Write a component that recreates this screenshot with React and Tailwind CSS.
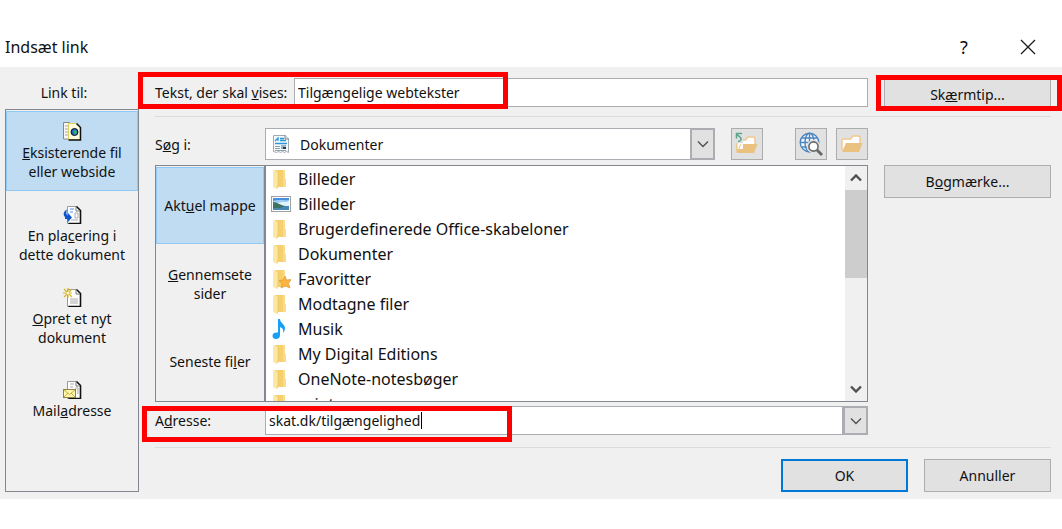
import React from "react";

const FolderIcon = ({ starred }) => (
  <svg width="20" height="20" viewBox="0 0 20 20" aria-hidden="true">
    <path d="M4 1h10v9h1v8H4z" fill="#f6d06f" />
    <path d="M12 1h2v9h1v8h-3z" fill="#f9dc8a" />
    <path d="M2 1l5 2v13l-1 4-4-2z" fill="#fde7a4" />
    <path d="M7 3v13l-1 3.5" fill="none" stroke="#f0c95f" strokeWidth="0.8" />
    {starred && (
      <path
        d="M14 7l1.5 4 4.5-.5-2.5 4 1.5 4.5-4.500-2L10 19l1-4.500L8 11.500l4-.5z"
        fill="#fbb540"
        stroke="#dd9638"
        strokeWidth="0.7"
      />
    )}
  </svg>
);

const PictureIcon = () => (
  <svg width="20" height="20" viewBox="0 0 20 20" aria-hidden="true">
    <rect x="0.5" y="2.5" width="19" height="15" fill="#fff" stroke="#a0a0a0" />
    <rect x="2" y="4" width="16" height="12" fill="#9fcdf5" />
    <path d="M2 4h16v2c-5 1-10-1-16 1z" fill="#4a8fdc" />
    <path d="M7 9c4-2 7 0 11-2v5H8z" fill="#e4f2fb" />
    <path d="M2 8c4 0 7 3 12 4H2z" fill="#3d7564" />
    <path d="M2 12h16v4H2z" fill="#4787b4" />
    <path d="M2 12h12l-5 2H2z" fill="#3f7267" />
  </svg>
);

const MusicIcon = () => (
  <svg width="20" height="20" viewBox="0 0 20 20" aria-hidden="true">
    <path
      d="M7 0h2c0 4 5 5 5 9 0 2-1 4-2 5 1-4-1-5-3-6v8c0 3-2 4-4 4s-3.500-1-3.500-3C1.500 14 4 13 7 13.500z"
      fill="#18a0f5"
    />
  </svg>
);

const DocumentIcon = () => (
  <svg width="18" height="20" viewBox="0 0 18 20" aria-hidden="true">
    <path d="M1.500 1.500h12l3 3v14l-2-1-2 1-2-1-2 1-2-1-2 1-3-1z" fill="#f7f9fa" stroke="#a3abaf" />
    <path d="M13 1v4h4" fill="#dfe4e7" stroke="#7f8a8f" />
    <path d="M3 7l3-3v3M8 4.500h4M8 6.500h6M3 9.500h12" stroke="#2897dc" strokeWidth="1.3" fill="none" />
    <path d="M3 12.500h5M3 14.500h5M3 16.500h11" stroke="#8aa0ab" />
    <rect x="9" y="11" width="5" height="4" fill="#8fb6cc" />
    <path d="M11 13h3v2h-3z" fill="#203a55" />
  </svg>
);

const Page = () => (
  <g>
    <path d="M4.500 1.500h9l4 4v13h-13z" fill="#fff" stroke="#9a9a9a" />
    <path d="M13.500 1.500l4 4v13h-12" fill="none" stroke="#111" strokeWidth="1.6" />
    <path d="M13 2v4h4" fill="none" stroke="#777" />
  </g>
);

const WebPageIcon = () => (
  <svg width="19" height="19" viewBox="0 0 19 19" aria-hidden="true">
    <path d="M0.500 0.500h6l2 2V17h-8z" fill="#f6f6f6" stroke="#888" />
    <path d="M2 4h3M2 7h3M2 10h3M2 13h3" stroke="#aaa" />
    <path d="M5.500 1.500h8l4 4v12h-12z" fill="#fffde0" stroke="#e0d060" />
    <path d="M13.500 1.500l4 4v12.500h-12" fill="none" stroke="#111" strokeWidth="1.5" />
    <circle cx="11.500" cy="10" r="3.500" fill="#1c62b8" stroke="#111" />
    <path d="M10 9l3-1 1 3-2 2-1-2z" fill="#35b56a" />
  </svg>
);

const PlaceIcon = () => (
  <svg width="19" height="19" viewBox="0 0 19 19" aria-hidden="true">
    <Page />
    <path d="M7 4h4M7 7h3" stroke="#4c8df0" />
    <path d="M12 8h3v5h-3zM8 15h7" fill="none" stroke="#aaa" />
    <path d="M4 4.500C0 6.500 0 10 2 12v2h2.500v3.500L9 12.500 5 8v3C3 9.500 3 7 4 4.500z" fill="#0f57c8" />
  </svg>
);

const NewDocIcon = () => (
  <svg width="19" height="19" viewBox="0 0 19 19" aria-hidden="true">
    <Page />
    <path d="M7 11h8M7 13h8M7 15h8" stroke="#aaa" />
    <path d="M5 0v10M0 5h9M1 1l8 8M9 1L1 9" stroke="#d6b52c" strokeWidth="1.2" />
    <circle cx="5" cy="5" r="1.500" fill="#fff8c0" />
  </svg>
);

const MailIcon = () => (
  <svg width="19" height="19" viewBox="0 0 19 19" aria-hidden="true">
    <Page />
    <path d="M7 4h4M7 7h3M12 8h3v6" fill="none" stroke="#aaa" />
    <rect x="0.500" y="9.500" width="12" height="8" fill="#fff6b0" stroke="#8d8146" />
    <path d="M1 10l5.500 4.500L12 10M1 17l4-4M12 17l-4-4" fill="none" stroke="#c8ad3a" />
  </svg>
);

const OpenFolder = () => (
  <g>
    <path
      d="M2 17V7.500c0-1 .5-1.500 1.500-1.500h7L13 3h5.500c1 0 1.500.5 1.500 1.500V10"
      fill="#fff"
      stroke="#f0c78b"
      strokeWidth="1.4"
    />
    <path d="M6 10h16.500L19 19H2z" fill="#ebc180" />
  </g>
);

const OpenFolderIcon = () => (
  <svg width="24" height="22" viewBox="0 0 24 22" aria-hidden="true">
    <OpenFolder />
  </svg>
);

const UpFolderIcon = () => (
  <svg width="24" height="24" viewBox="0 0 24 24" aria-hidden="true">
    <g transform="translate(0 2)">
      <OpenFolder />
    </g>
    <path d="M0 0h8v11H0z" fill="#e1e1e1" />
    <path d="M2 12h6v5H2z" fill="#fff" />
    <path d="M2 12v8M2 20.500L6 12" stroke="#ebc180" />
    <path d="M7 1.500H1.500v5M1.500 2l4 3.500c1.500 1.500 0 4-2.500 4" fill="none" stroke="#5da68c" strokeWidth="1.6" />
  </svg>
);

const SearchWebIcon = () => (
  <svg width="24" height="24" viewBox="0 0 24 24" aria-hidden="true">
    <g fill="#f4f7fa" stroke="#4c86c0" strokeWidth="1.4">
      <circle cx="10.500" cy="10.500" r="9.300" />
      <ellipse cx="10.500" cy="10.500" rx="4.500" ry="9.300" />
      <path d="M10.500 1.200v18.600M2.500 6h16M1.200 10.500h18.600M2.500 15h16" fill="none" />
    </g>
    <circle cx="14.500" cy="14.500" r="4.800" fill="#fff" stroke="#e1e1e1" strokeWidth="4" />
    <path d="M18 18l5 5" stroke="#676767" strokeWidth="2.800" />
    <circle cx="14.500" cy="14.500" r="4.600" fill="#fff" stroke="#676767" strokeWidth="1.600" />
  </svg>
);

const Chevron = ({ up, bold }) => (
  <svg width="12" height="8" viewBox="0 0 12 8" aria-hidden="true">
    <path
      d={up ? "M1 6.500l5-5 5 5" : "M1 1.500l5 5 5-5"}
      fill="none"
      stroke="#505050"
      strokeWidth={bold ? 2.4 : 1.4}
    />
  </svg>
);

const linkTargets = [
  { icon: <WebPageIcon />, label: <><u>E</u>ksisterende fil<br />eller webside</>, active: true },
  { icon: <PlaceIcon />, label: <>En pla<u>c</u>ering i<br />dette dokument</> },
  { icon: <NewDocIcon />, label: <><u>O</u>pret et nyt<br />dokument</> },
  { icon: <MailIcon />, label: <>Mail<u>a</u>dresse</> },
];

const places = [
  { label: <>Akt<u>u</u>el mappe</>, active: true },
  { label: <><u>G</u>ennemsete<br />sider</> },
  { label: <>Seneste fi<u>l</u>er</> },
];

const files = [
  { name: "Billeder", icon: <FolderIcon /> },
  { name: "Billeder", icon: <PictureIcon /> },
  { name: "Brugerdefinerede Office-skabeloner", icon: <FolderIcon /> },
  { name: "Dokumenter", icon: <FolderIcon /> },
  { name: "Favoritter", icon: <FolderIcon starred /> },
  { name: "Modtagne filer", icon: <FolderIcon /> },
  { name: "Musik", icon: <MusicIcon /> },
  { name: "My Digital Editions", icon: <FolderIcon /> },
  { name: "OneNote-notesbøger", icon: <FolderIcon /> },
  { name: "print", icon: <FolderIcon /> },
];

const DialogButton = ({ children, primary }) => (
  <button
    type="button"
    className={
      primary
        ? "h-[33px] w-[127px] border-2 border-[#0078d7] bg-[#e1e1e1] text-center"
        : "h-[33px] w-[127px] border border-[#adadad] bg-[#e1e1e1] text-center"
    }
  >
    {children}
  </button>
);

const SideButton = ({ children }) => (
  <button type="button" className="h-[33px] w-full border border-[#adadad] bg-[#e1e1e1] text-center">
    {children}
  </button>
);

const ToolButton = ({ label, children }) => (
  <button
    type="button"
    aria-label={label}
    className="flex h-8 w-8 shrink-0 items-center justify-center border border-[#adadad] bg-[#e1e1e1]"
  >
    {children}
  </button>
);

const App = () => {
  return (
    <div className="min-h-screen bg-white font-['Noto_Sans',sans-serif] text-sm leading-[19px] text-[#111111]">
      <header className="flex h-[67px] items-center justify-between pt-[26px] pr-[26px] pl-[5px]">
        <h1 className="text-base">Indsæt link</h1>
        <div className="flex items-center gap-[50px]">
          <button type="button" className="w-3 text-lg" aria-label="Hjælp">?</button>
          <button type="button" aria-label="Luk">
            <svg width="16" height="16" viewBox="0 0 16 16">
              <path d="M1 1l14 14M15 1L1 15" stroke="#1b1b1b" strokeWidth="1.3" />
            </svg>
          </button>
        </div>
      </header>

      <main className="flex gap-4 bg-[#f0f0f0] pr-[11px] pb-[7px] pl-[5px]">
        {/* Link til */}
        <nav className="flex w-[134px] shrink-0 flex-col pt-4" aria-labelledby="link-til">
          <h2 id="link-til" className="h-[26px] pr-4 text-center">Link til:</h2>
          <div className="flex flex-1 flex-col gap-[3px] border border-[#828790] pt-px">
            {linkTargets.map((item, i) => (
              <button
                key={i}
                type="button"
                className={
                  item.active
                    ? "flex h-20 w-full flex-col items-center justify-center gap-0.5 border border-[#90c8f6] bg-[#c0dcf3]"
                    : "flex h-20 w-full flex-col items-center justify-center gap-0.5"
                }
              >
                {item.icon}
                <span>{item.label}</span>
              </button>
            ))}
          </div>
        </nav>

        <div className="min-w-0 flex-1 pt-[11px]">
          {/* Display text */}
          <div className="flex gap-4">
            <div className="relative flex flex-1 items-center self-start">
              <label htmlFor="display" className="w-[139px] shrink-0">
                Tekst, der skal <u>v</u>ises:
              </label>
              <input
                id="display"
                defaultValue="Tilgængelige webtekster"
                className="h-[29px] min-w-0 flex-1 border border-[#abadb3] bg-white px-[3px]"
              />
              <div className="pointer-events-none absolute -top-1.5 -left-[17px] h-[37px] w-[370px] border-5 border-[#ff0000]" />
            </div>
            <div className="relative w-[167px] shrink-0">
              <SideButton>Sk<u>æ</u>rmtip...</SideButton>
              <div className="pointer-events-none absolute -top-[3px] -right-[11px] -left-2 h-9 border-5 border-[#ff0000]" />
            </div>
          </div>

          <div className="mt-[5px] border-t border-[#dcdcdc]" />

          {/* Browse */}
          <div className="mt-[11px] flex gap-4">
            <div className="min-w-0 flex-1">
              <div className="flex items-center">
                <label htmlFor="look-in" className="w-[110px] shrink-0">S<u>ø</u>g i:</label>
                <div className="relative flex-1">
                  <select
                    id="look-in"
                    className="block h-8 w-full appearance-none border border-[#abadb3] bg-white pl-[34px]"
                  >
                    <option>Dokumenter</option>
                  </select>
                  <span className="pointer-events-none absolute top-1.5 left-[7px]"><DocumentIcon /></span>
                  <span className="pointer-events-none absolute inset-y-0 right-0 flex w-[25px] items-center justify-center border-2 border-[#abadb3] bg-[#e1e1e1]">
                    <Chevron />
                  </span>
                </div>
                <div className="ml-4 flex gap-8">
                  <ToolButton label="Et niveau op"><UpFolderIcon /></ToolButton>
                  <div className="flex gap-[9px]">
                    <ToolButton label="Søg på internettet"><SearchWebIcon /></ToolButton>
                    <ToolButton label="Søg efter fil"><OpenFolderIcon /></ToolButton>
                  </div>
                </div>
              </div>

              <div className="mt-[5px] flex h-[237px] border border-[#828790]">
                <div className="flex w-[108px] shrink-0 flex-col gap-px pt-px">
                  {places.map((item, i) => (
                    <button
                      key={i}
                      type="button"
                      className={
                        item.active
                          ? "block h-[77px] w-full border border-[#90c8f6] bg-[#c0dcf3]"
                          : "block h-[77px] w-full"
                      }
                    >
                      {item.label}
                    </button>
                  ))}
                </div>
                <ul className="min-w-0 flex-1 overflow-hidden border-l-2 border-[#828790] bg-white pl-[5px] text-base">
                  {files.map((file, i) => (
                    <li key={i} className="flex h-[25px] items-center gap-[7px]">
                      {file.icon}
                      <span>{file.name}</span>
                    </li>
                  ))}
                </ul>
                <div className="flex w-[22px] shrink-0 flex-col bg-[#f0f0f0]">
                  <button type="button" aria-label="Rul op" className="flex h-6 items-center justify-center">
                    <Chevron up bold />
                  </button>
                  <div className="h-[88px] bg-[#cdcdcd]" />
                  <div className="flex-1" />
                  <button type="button" aria-label="Rul ned" className="flex h-6 items-center justify-center">
                    <Chevron bold />
                  </button>
                </div>
              </div>

              <div className="relative mt-1 flex items-center">
                <label htmlFor="address" className="w-[110px] shrink-0">A<u>d</u>resse:</label>
                <div className="relative flex flex-1">
                  <input
                    id="address"
                    defaultValue="skat.dk/tilgængelighed"
                    className="h-[29px] min-w-0 flex-1 border border-[#abadb3] bg-white px-[3px]"
                  />
                  <button
                    type="button"
                    aria-label="Vis adresser"
                    className="flex w-[25px] items-center justify-center border-2 border-[#abadb3] bg-[#e1e1e1]"
                  >
                    <Chevron />
                  </button>
                  <span className="absolute top-1.5 left-[156px] h-[17px] w-px bg-black" />
                </div>
                <div className="pointer-events-none absolute top-0 -left-[13px] h-9 w-[370px] border-5 border-[#ff0000]" />
              </div>
            </div>

            <div className="w-[167px] shrink-0 pt-[37px]">
              <SideButton>B<u>o</u>gmærke...</SideButton>
            </div>
          </div>

          <div className="mt-3 border-t border-[#dcdcdc]" />

          <div className="mt-[11px] flex justify-end gap-4">
            <DialogButton primary>OK</DialogButton>
            <DialogButton>Annuller</DialogButton>
          </div>
        </div>
      </main>
    </div>
  );
};

export default App;
